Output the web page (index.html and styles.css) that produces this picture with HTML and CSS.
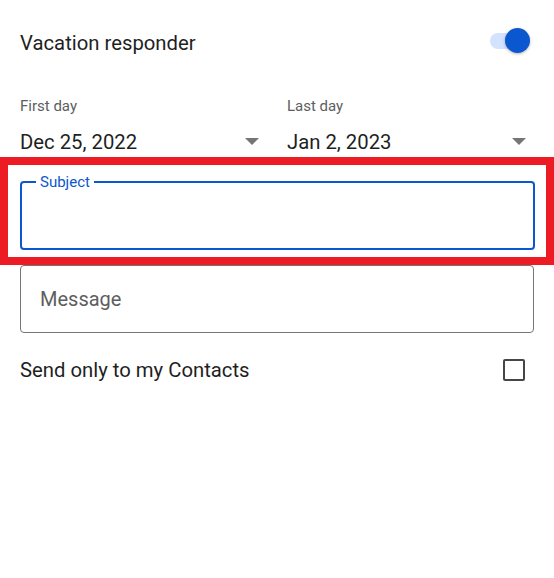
FILE: index.html
```html
<!DOCTYPE html>
<html lang="en">

<head>
    <meta charset="UTF-8">
    <meta name="viewport" content="width=device-width, initial-scale=1.0">
    <title>Vacation responder</title>
    <link rel="stylesheet" href="styles.css">
</head>

<body>
    <div class="container">
        <div class="row-header">
            <span class="title">Vacation responder</span>
            <div class="switch">
                <div class="switch-track"></div>
                <div class="switch-thumb"></div>
            </div>
        </div>

        <div class="dates">
            <div class="date-col">
                <div class="date-label">First day</div>
                <div class="date-value">
                    <span>Dec 25, 2022</span>
                    <span class="arrow"></span>
                </div>
            </div>
            <div class="date-col">
                <div class="date-label">Last day</div>
                <div class="date-value">
                    <span>Jan 2, 2023</span>
                    <span class="arrow"></span>
                </div>
            </div>
        </div>

        <div class="highlight">
            <div class="field field-focus">
                <span class="field-label">Subject</span>
            </div>
        </div>

        <div class="field field-message">
            <span class="placeholder">Message</span>
        </div>

        <div class="row-contacts">
            <span>Send only to my Contacts</span>
            <span class="checkbox"></span>
        </div>
    </div>
</body>

</html>
```

FILE: styles.css
```css
body {
    margin: 0;
    background-color: #fff;
    font-family: Roboto, "Noto Sans", sans-serif;
    color: #1f1f1f;
}

.container {
    width: 554px;
    padding: 0 20px;
    box-sizing: border-box;
}

.row-header {
    height: 86px;
    display: flex;
    align-items: center;
    justify-content: space-between;
}

.title {
    font-size: 20.3px;
}

.switch {
    position: relative;
    width: 40px;
    height: 26px;
    margin-right: 4px;
    margin-top: -4px;
    display: flex;
    align-items: center;
}

.switch-track {
    width: 36px;
    height: 16px;
    border-radius: 8px;
    background-color: #d3e3fd;
}

.switch-thumb {
    position: absolute;
    right: 0;
    top: 0;
    width: 25px;
    height: 25px;
    border-radius: 50%;
    background-color: #0b57d0;
    box-shadow: 0 1px 3px rgba(0, 0, 0, 0.3);
}

.dates {
    display: flex;
    gap: 20px;
    padding-top: 10px;
}

.date-col {
    flex: 1;
}

.date-label {
    font-size: 15px;
    line-height: 20px;
    color: #5e5e5e;
}

.date-value {
    display: flex;
    align-items: center;
    justify-content: space-between;
    height: 31px;
    margin-top: 10px;
    font-size: 20.3px;
}

.arrow {
    width: 0;
    height: 0;
    margin-right: 8px;
    border-left: 7px solid transparent;
    border-right: 7px solid transparent;
    border-top: 7px solid #757575;
}

.highlight {
    margin: 0 -20px;
    border: 8px solid #ed1c24;
    padding: 16px 11px 7px 12px;
}

.field {
    position: relative;
    height: 69px;
    box-sizing: border-box;
    border-radius: 4px;
}

.field-focus {
    border: 2px solid #0b57d0;
}

.field-label {
    position: absolute;
    top: -10px;
    left: 14px;
    padding: 0 4px;
    background-color: #fff;
    font-size: 15px;
    line-height: 18px;
    color: #0b57d0;
}

.field-message {
    height: 68px;
    border: 1px solid #747775;
    display: flex;
    align-items: center;
    padding-left: 19px;
}

.placeholder {
    font-size: 20px;
    color: #5e5e5e;
}

.row-contacts {
    height: 74px;
    display: flex;
    align-items: center;
    justify-content: space-between;
    font-size: 20.3px;
}

.checkbox {
    width: 18px;
    height: 18px;
    margin-right: 9px;
    border: 2px solid #444746;
    border-radius: 2px;
}
```
